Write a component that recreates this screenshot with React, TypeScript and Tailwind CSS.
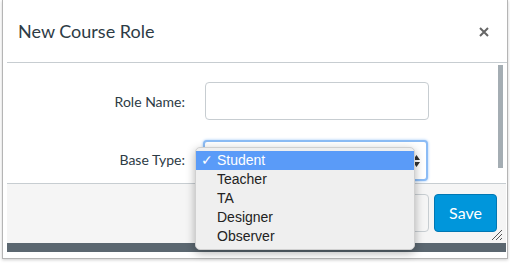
import type { ReactNode } from 'react';

const roles = ['Student', 'Teacher', 'TA', 'Designer', 'Observer'];

function FieldRow({ label, children }: { label: string; children: ReactNode }) {
  return (
    <div className="flex items-center">
      <label className="w-[178px] text-right text-[14px] text-[#2d3b45]">{label}</label>
      <div className="ml-[20px]">{children}</div>
    </div>
  );
}

function RoleMenu() {
  return (
    <div className="absolute left-[195px] top-[147px] w-[220px] rounded-[5px] border border-[#d0d0d0] bg-[#efefef] py-[3px] shadow-[0_3px_10px_rgba(0,0,0,0.3)] font-['Liberation_Sans',sans-serif] text-[14px] text-[#222]">
      {roles.map((role, i) => (
        <div
          key={role}
          className={
            i === 0
              ? 'flex h-[19px] items-center bg-[#5a9bf8] text-white'
              : 'flex h-[19px] items-center'
          }
        >
          <span className="w-[21px] pl-[5px] text-[14px]">{i === 0 ? '✓' : ''}</span>
          <span>{role}</span>
        </div>
      ))}
    </div>
  );
}

export default function App() {
  return (
    <div className="relative h-[263px] w-[510px] overflow-hidden bg-white font-['Lato',sans-serif]">
      <div className="ml-[2px] h-[259px] w-[506px] border-x border-b border-[#b5b5b5] bg-white shadow-[0_1px_3px_rgba(0,0,0,0.2)]">
        <div className="flex h-[62px] items-center justify-between pl-[15px] pr-[18px]">
          <h1 className="text-[18px] text-[#2d3b45]">New Course Role</h1>
          <svg width="10" height="10" viewBox="0 0 10 10" className="mt-[2px]">
            <path d="M1 1L9 9M9 1L1 9" stroke="#666" strokeWidth="2" />
          </svg>
        </div>
        <div className="ml-[4px] flex h-[121px] border-t border-[#c7cdd1]">
          <div className="flex flex-1 flex-col gap-[18px] pt-[19px]">
            <FieldRow label="Role Name:">
              <div className="h-[38px] w-[224px] rounded-[4px] border border-[#c7cdd1] bg-white" />
            </FieldRow>
            <FieldRow label="Base Type:">
              <div className="-ml-[2px] mt-[2px] flex h-[41px] w-[225px] items-center justify-end rounded-[4px] border-2 border-[#8cbcf5] bg-white pr-[6px] shadow-[0_0_3px_#9cc6f7]">
                <svg width="7" height="12" viewBox="0 0 7 12">
                  <path d="M3.5 0L7 5H0Z M3.5 12L0 7H7Z" fill="#333" />
                </svg>
              </div>
            </FieldRow>
          </div>
          <div className="mr-[4px] pt-[2px]">
            <div className="h-[103px] w-[5px] bg-[#a4adb3]" />
          </div>
        </div>
        <div className="relative ml-[4px] mr-[1px] flex h-[60px] items-start justify-end gap-[5px] border-t border-[#c7cdd1] bg-[#f5f5f5] pr-[9px] pt-[10px]">
          <div className="h-[38px] w-[80px] rounded-[4px] border border-[#c7cdd1] bg-[#f5f5f5]" />
          <button className="h-[38px] w-[63px] rounded-[4px] border border-[#0077b3] bg-[#0096db] text-[16px] text-white">
            Save
          </button>
          <svg width="12" height="12" viewBox="0 0 12 12" className="absolute bottom-[2px] right-[3px]">
            <path d="M11 1L1 11M11 5L5 11M11 9L9 11" stroke="#555" strokeWidth="1" />
          </svg>
        </div>
        <div className="ml-[4px] mr-[1px] h-[9px] bg-[#5b6770]" />
      </div>
      <RoleMenu />
    </div>
  );
}
